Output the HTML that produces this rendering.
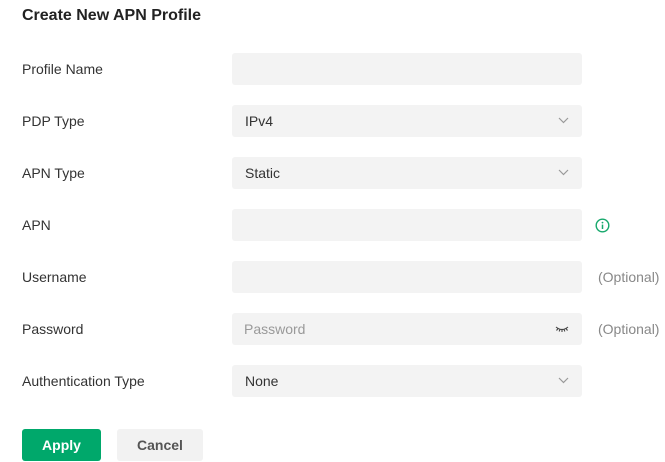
<!DOCTYPE html>
<html><head><style>
*{margin:0;padding:0;box-sizing:border-box}
body{width:665px;height:462px;background:#fff;font-family:"Liberation Sans",sans-serif;color:#333;position:relative;overflow:hidden}
.t{position:absolute;left:22px;top:7px;font-size:16px;font-weight:bold;color:#222}
.l{position:absolute;left:22px;font-size:14px;color:#333;line-height:32px}
.i{position:absolute;left:232px;width:350px;height:32px;background:#f3f3f3;border-radius:3px;font-size:14px;line-height:32px;padding-left:13px;color:#333}
.ph{color:#999;padding-left:12px}
.c{position:absolute;right:13px;top:11px}
.o{position:absolute;left:598px;font-size:14px;color:#888;line-height:32px}
.b{position:absolute;top:429px;height:32px;border-radius:3px;font-size:14px;font-weight:bold;text-align:center;line-height:32px}
</style></head><body>
<div class="t">Create New APN Profile</div>

<div class="l" style="top:53px">Profile Name</div>
<div class="i" style="top:53px"></div>

<div class="l" style="top:105px">PDP Type</div>
<div class="i" style="top:105px">IPv4<svg class="c" width="11" height="8" viewBox="0 0 11 8"><path d="M1 2l4.5 4.5L10 2" fill="none" stroke="#999" stroke-width="1.2"/></svg></div>

<div class="l" style="top:157px">APN Type</div>
<div class="i" style="top:157px">Static<svg class="c" width="11" height="8" viewBox="0 0 11 8"><path d="M1 2l4.5 4.5L10 2" fill="none" stroke="#999" stroke-width="1.2"/></svg></div>

<div class="l" style="top:209px">APN</div>
<div class="i" style="top:209px"></div>
<svg style="position:absolute;left:595px;top:218px" width="15" height="15" viewBox="0 0 15 15"><circle cx="7.5" cy="7.5" r="6.3" fill="none" stroke="#16a86c" stroke-width="1.4"/><circle cx="7.5" cy="4.6" r="0.9" fill="#16a86c"/><path d="M7.5 6.6v4.4" stroke="#16a86c" stroke-width="1.5"/></svg>

<div class="l" style="top:261px">Username</div>
<div class="i" style="top:261px"></div>
<div class="o" style="top:261px">(Optional)</div>

<div class="l" style="top:313px">Password</div>
<div class="i ph" style="top:313px">Password<svg style="position:absolute;right:13px;top:12px" width="14" height="8" viewBox="0 0 14 8"><path d="M1 2q6 5 12 0M3 3.5l-1.5 2M7 4.5v2.5M11 3.5l1.5 2M5 4.2l-.8 2.3M9 4.2l.8 2.3" fill="none" stroke="#444" stroke-width="1.1"/></svg></div>
<div class="o" style="top:313px">(Optional)</div>

<div class="l" style="top:365px">Authentication Type</div>
<div class="i" style="top:365px">None<svg class="c" width="11" height="8" viewBox="0 0 11 8"><path d="M1 2l4.5 4.5L10 2" fill="none" stroke="#999" stroke-width="1.2"/></svg></div>

<div class="b" style="left:22px;width:79px;background:#00a86b;color:#fff">Apply</div>
<div class="b" style="left:117px;width:86px;background:#f2f2f2;color:#555">Cancel</div>
</body></html>
